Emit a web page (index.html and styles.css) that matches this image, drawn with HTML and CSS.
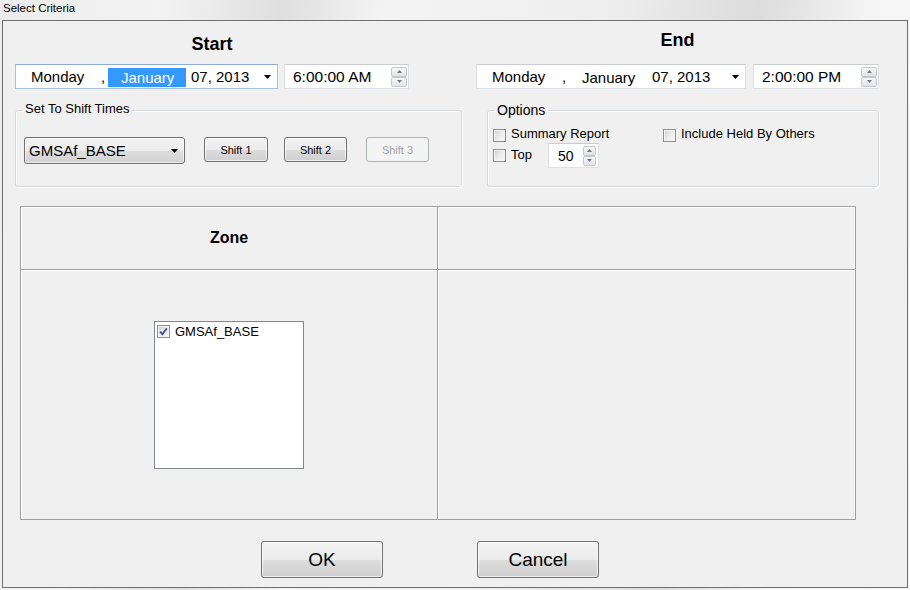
FILE: index.html
```html
<!DOCTYPE html>
<html lang="en">
<head>
<meta charset="utf-8">
<title>Select Criteria</title>
<link rel="stylesheet" href="styles.css">
</head>
<body>
<div class="titlebar">Select Criteria</div>
<div class="frame">
  <div class="top-row">
    <div class="dt-col start-col">
      <div class="dt-title">Start</div>
      <div class="dt-row">
        <div class="datebox start-date">
          <span class="f-day">Monday</span><span class="f-comma">,</span><span class="f-month sel">January</span><span class="f-rest">07, 2013</span>
          <svg class="dd-arrow" viewBox="0 0 7 4" width="7" height="4"><path d="M0 0H7L3.5 4Z" fill="#000"/></svg>
        </div>
        <div class="timebox start-time">
          <span class="time-text">6:00:00 AM</span>
          <div class="spin">
            <div class="spin-btn"><svg viewBox="0 0 5 3" width="5" height="3"><path d="M0 3H5L2.5 0Z" fill="#6a7a96"/></svg></div>
            <div class="spin-btn"><svg viewBox="0 0 5 3" width="5" height="3"><path d="M0 0H5L2.5 3Z" fill="#6a7a96"/></svg></div>
          </div>
        </div>
      </div>
    </div>
    <div class="dt-col end-col">
      <div class="dt-title">End</div>
      <div class="dt-row">
        <div class="datebox end-date">
          <span class="f-day">Monday</span><span class="f-comma">,</span><span class="f-month">January</span><span class="f-rest">07, 2013</span>
          <svg class="dd-arrow" viewBox="0 0 7 4" width="7" height="4"><path d="M0 0H7L3.5 4Z" fill="#000"/></svg>
        </div>
        <div class="timebox end-time">
          <span class="time-text">2:00:00 PM</span>
          <div class="spin">
            <div class="spin-btn"><svg viewBox="0 0 5 3" width="5" height="3"><path d="M0 3H5L2.5 0Z" fill="#6a7a96"/></svg></div>
            <div class="spin-btn"><svg viewBox="0 0 5 3" width="5" height="3"><path d="M0 0H5L2.5 3Z" fill="#6a7a96"/></svg></div>
          </div>
        </div>
      </div>
    </div>
  </div>

  <div class="group-row">
    <div class="group shift-group">
      <div class="group-label">Set To Shift Times</div>
      <div class="shift-controls">
        <div class="combo"><span>GMSAf_BASE</span><svg class="dd-arrow" viewBox="0 0 7 4" width="7" height="4"><path d="M0 0H7L3.5 4Z" fill="#000"/></svg></div>
        <button class="btn btn-shift s1">Shift 1</button>
        <button class="btn btn-shift s2">Shift 2</button>
        <button class="btn btn-shift s3" disabled>Shift 3</button>
      </div>
    </div>
    <div class="group options-group">
      <div class="group-label opt-label">Options</div>
      <div class="opt-row opt-row1">
        <label class="check summary"><span class="cb"></span><span class="check-text">Summary Report</span></label>
        <label class="check"><span class="cb"></span><span class="check-text">Include Held By Others</span></label>
      </div>
      <div class="opt-row opt-row2">
        <label class="check topcheck"><span class="cb"></span><span class="check-text">Top</span></label>
        <div class="numbox">
          <span class="num-text">50</span>
          <div class="spin small-spin">
            <div class="spin-btn"><svg viewBox="0 0 5 3" width="5" height="3"><path d="M0 3H5L2.5 0Z" fill="#6a7a96"/></svg></div>
            <div class="spin-btn"><svg viewBox="0 0 5 3" width="5" height="3"><path d="M0 0H5L2.5 3Z" fill="#6a7a96"/></svg></div>
          </div>
        </div>
      </div>
    </div>
  </div>

  <div class="zone-grid">
    <div class="cell c1 head zone-head">Zone</div>
    <div class="cell c2 head"></div>
    <div class="cell c1 body-cell">
      <div class="listbox">
        <div class="list-item">
          <span class="cb checked"><svg viewBox="0 0 11 11" width="11" height="11"><path d="M2.2 5.6L4.4 8.2L8.8 2.4" fill="none" stroke="#3f5687" stroke-width="1.8"/></svg></span>
          <span>GMSAf_BASE</span>
        </div>
      </div>
    </div>
    <div class="cell c2 body-cell"></div>
  </div>

  <div class="actions">
    <button class="btn btn-big">OK</button>
    <button class="btn btn-big cancel">Cancel</button>
  </div>
</div>
</body>
</html>
```

FILE: styles.css
```css
* { box-sizing: border-box; }
html, body { margin: 0; padding: 0; }
body {
  width: 910px;
  height: 590px;
  overflow: hidden;
  font-family: "Liberation Sans", Arial, sans-serif;
  color: #000;
  background: linear-gradient(100deg, #ececec 0%, #f3f3f3 16%, #dfdfdf 28%, #f4f4f4 38%, #eeeeee 60%, #dcdcdc 75%, #f5f5f5 86%, #f7f7f7 100%);
}

.titlebar {
  height: 20px;
  padding: 1px 0 0 3px;
  font-size: 11.5px;
  line-height: 14px;
}

.frame {
  margin-left: 2px;
  width: 906px;
  height: 568px;
  border: 1px solid #6f6f6f;
  background: #f0f0f0;
}

/* ---- Start / End ---- */
.top-row { display: flex; align-items: flex-start; padding-left: 12px; }
.dt-col { display: flex; flex-direction: column; }
.start-col { width: 394px; margin-top: 13px; }
.end-col { width: 403px; margin-top: 9px; margin-left: 67px; }
.dt-title { font-size: 18px; font-weight: bold; line-height: 21px; text-align: center; }
.dt-row { display: flex; justify-content: space-between; height: 25px; }
.start-col .dt-row { margin-top: 9px; }
.end-col .dt-row { margin-top: 13px; }

.datebox {
  display: flex;
  align-items: center;
  height: 25px;
  padding: 0 6px 0 15px;
  background: #fff;
  border: 1px solid #dcdfe3;
  border-top-color: #c9ccd1;
  font-size: 15px;
  white-space: nowrap;
}
.start-date { width: 263px; border-color: #a9c0dc; border-top-color: #8fabcf; }
.end-date { width: 270px; }
.f-day { width: 70px; }
.f-comma { width: 7px; }
.f-month { width: 78px; padding-left: 13px; height: 19px; line-height: 19px; margin-top: 1px; }
.f-month.sel { background: #3399ff; color: #fff; }
.f-rest { margin-left: 5px; }
.dd-arrow { display: block; margin-left: auto; flex: none; }

.timebox {
  display: flex;
  align-items: center;
  height: 25px;
  padding: 0 1px 0 8px;
  background: #fff;
  border: 1px solid #dcdfe3;
  border-top-color: #c9ccd1;
  font-size: 15.5px;
  white-space: nowrap;
}
.start-time { width: 125px; }
.end-time { width: 126px; }

.spin {
  margin-left: auto;
  display: flex;
  flex-direction: column;
  width: 16px;
  height: 20px;
  flex: none;
}
.spin-btn {
  flex: 1;
  display: flex;
  align-items: center;
  justify-content: center;
  border: 1px solid #c3c8cf;
  border-radius: 2px;
  background: linear-gradient(#f8f8f8, #e3e3e3);
}
.spin-btn svg { display: block; }

/* ---- Groups ---- */
.group-row { display: flex; margin-top: 21px; padding-left: 12px; }
.group {
  height: 77px;
  border: 1px solid #d5d9dc;
  border-radius: 3px;
  box-shadow: inset 1px 1px 0 #fff, 1px 1px 0 #fff;
  display: flex;
  flex-direction: column;
  align-items: flex-start;
}
.shift-group { width: 447px; }
.options-group { width: 392px; margin-left: 25px; }
.group-label {
  background: #f0f0f0;
  padding: 0 2px;
  margin: -10px 0 0 7px;
  font-size: 13px;
  line-height: 16px;
}
.opt-label { font-size: 14px; margin-top: -9px; }

.shift-controls { display: flex; align-items: flex-start; margin: 20px 0 0 8px; }
.combo {
  width: 161px;
  height: 27px;
  display: flex;
  align-items: center;
  padding: 0 6px 0 4px;
  border: 1px solid #707070;
  border-radius: 3px;
  background: linear-gradient(#f3f3f3 0%, #ececec 50%, #dedede 51%, #d2d2d2 100%);
  box-shadow: inset 0 0 0 1px rgba(255,255,255,0.6);
  font-size: 15px;
}

.btn {
  font-family: inherit;
  color: #000;
  padding: 0;
  border: 1px solid #707070;
  border-radius: 3px;
  background: linear-gradient(#f2f2f2 0%, #ebebeb 50%, #dddddd 51%, #cfcfcf 100%);
  box-shadow: inset 0 0 0 1px rgba(255,255,255,0.7);
}
.btn-shift { height: 25px; font-size: 11px; }
.s1 { width: 64px; margin-left: 19px; }
.s2 { width: 63px; margin-left: 16px; }
.s3 { width: 63px; margin-left: 19px; }
.btn:disabled {
  border-color: #adb2b5;
  background: #f4f4f4;
  color: #a3a3a3;
  box-shadow: none;
}

.opt-row { display: flex; align-items: center; padding-left: 5px; align-self: stretch; }
.opt-row1 { height: 16px; margin-top: 9px; }
.opt-row2 { height: 25px; }
.check { display: flex; align-items: center; font-size: 13px; white-space: nowrap; }
.check-text { padding-bottom: 3px; }
.summary { width: 170px; }
.topcheck { width: 55px; }

.cb {
  display: inline-flex;
  align-items: center;
  justify-content: center;
  flex: none;
  width: 13px;
  height: 13px;
  margin-right: 5px;
  border: 1px solid #8e8f8f;
  background: linear-gradient(135deg, #cfd2d6 0%, #eeeeee 60%, #f8f8f8 100%);
  box-shadow: inset 0 0 0 1px #f4f4f4;
}
.cb svg { display: block; }

.numbox {
  display: flex;
  align-items: center;
  width: 51px;
  height: 25px;
  padding: 0 2px 0 9px;
  background: #fff;
  border: 1px solid #dcdfe3;
  border-top-color: #c9ccd1;
  font-size: 14px;
}
.small-spin { width: 13px; height: 20px; }

/* ---- Zone grid ---- */
.zone-grid {
  display: grid;
  grid-template-columns: 417px 1fr;
  grid-template-rows: 63px 1fr;
  width: 836px;
  height: 314px;
  margin: 19px 0 0 17px;
  border: 1px solid #a0a0a0;
}
.cell { box-shadow: inset 1px 1px 0 #fff; }
.c1 { border-right: 1px solid #a0a0a0; }
.c2 { box-shadow: inset 1px 1px 0 #fff, inset -1px 0 0 #fff; }
.head { border-bottom: 1px solid #a0a0a0; }
.zone-head {
  display: flex;
  align-items: center;
  justify-content: center;
  font-size: 16px;
  font-weight: bold;
}
.body-cell { display: flex; align-items: center; justify-content: center; }
.listbox {
  width: 150px;
  height: 148px;
  background: #fff;
  border: 1px solid #828790;
}
.list-item {
  display: flex;
  align-items: center;
  height: 14px;
  margin: 3px 0 0 2px;
  font-size: 13px;
}
.list-item .cb { margin-right: 5px; }

/* ---- Actions ---- */
.actions { display: flex; margin: 21px 0 0 258px; }
.btn-big { width: 122px; height: 37px; font-size: 19px; }
.cancel { margin-left: 94px; }
```
